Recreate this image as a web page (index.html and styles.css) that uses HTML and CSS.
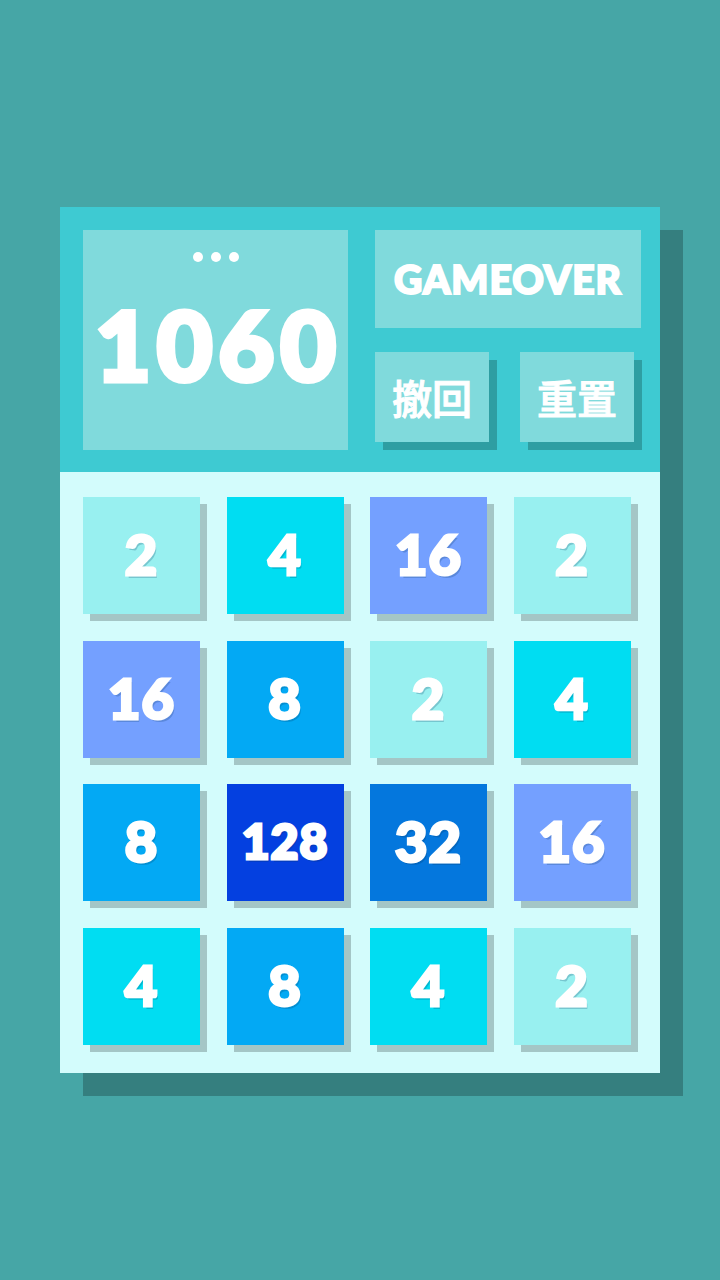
FILE: index.html
```html
<!DOCTYPE html>
<html lang="zh-Hant">
<head>
    <meta charset="UTF-8">
    <meta name="viewport" content="width=device-width, initial-scale=1.0">
    <title>2048</title>
    <link rel="stylesheet" href="styles.css">
</head>
<body>
    <div class="game">
        <div class="top">
            <div class="score-box">
                <div class="dots"><span></span><span></span><span></span></div>
                <div class="score">1060</div>
            </div>
            <div class="side">
                <div class="status">GAMEOVER</div>
                <div class="buttons">
                    <button class="btn">撤回</button>
                    <button class="btn">重置</button>
                </div>
            </div>
        </div>

        <div class="board">
            <div class="tile t2">2</div>
            <div class="tile t4">4</div>
            <div class="tile t16">16</div>
            <div class="tile t2">2</div>

            <div class="tile t16">16</div>
            <div class="tile t8">8</div>
            <div class="tile t2">2</div>
            <div class="tile t4">4</div>

            <div class="tile t8">8</div>
            <div class="tile t128 small">128</div>
            <div class="tile t32">32</div>
            <div class="tile t16">16</div>

            <div class="tile t4">4</div>
            <div class="tile t8">8</div>
            <div class="tile t4">4</div>
            <div class="tile t2">2</div>
        </div>
    </div>
</body>
</html>
```

FILE: styles.css
```css
body {
    margin: 0;
    min-height: 100vh;
    background: #46a6a6;
    display: flex;
    align-items: center;
    justify-content: center;
    font-family: 'Lato', 'Noto Sans', sans-serif;
}

.game {
    width: 600px;
    box-shadow: 23px 23px 0 #357f7f;
}

/* header: score + status + buttons */
.top {
    background: #3ecad2;
    height: 265px;
    box-sizing: border-box;
    padding: 23px 19px 22px 23px;
    display: flex;
    gap: 27px;
}

.score-box {
    width: 265px;
    height: 220px;
    background: #80dadc;
    display: flex;
    flex-direction: column;
    align-items: center;
    box-sizing: border-box;
    padding-top: 22px;
}

.dots {
    display: flex;
    gap: 8px;
}

.dots span {
    width: 10px;
    height: 10px;
    border-radius: 50%;
    background: white;
}

.score {
    color: white;
    font-size: 96px;
    font-weight: 900;
    line-height: 1;
    margin-top: 34px;
    letter-spacing: 6px;
    margin-right: -6px;
    -webkit-text-stroke: 5px white;
}

.side {
    width: 266px;
    display: flex;
    flex-direction: column;
    gap: 24px;
}

.status {
    height: 98px;
    background: #80dadc;
    color: white;
    font-size: 39px;
    font-weight: 900;
    letter-spacing: 1px;
    -webkit-text-stroke: 2px white;
    display: flex;
    align-items: center;
    justify-content: center;
}

.buttons {
    display: flex;
    gap: 31px;
}

.btn {
    width: 114px;
    height: 90px;
    border: none;
    padding: 0;
    background: #80dadc;
    color: white;
    font-family: 'Noto Sans CJK TC', sans-serif;
    font-size: 40px;
    font-weight: 500;
    -webkit-text-stroke: 1px white;
    box-shadow: 8px 8px 0 #2e9ea2;
    cursor: pointer;
}

/* board */
.board {
    background: #d3fcfc;
    height: 601px;
    box-sizing: border-box;
    padding: 25px 0 0 23px;
    display: grid;
    grid-template-columns: repeat(4, 117px);
    grid-auto-rows: 117px;
    gap: 26.5px;
}

.tile {
    display: flex;
    align-items: center;
    justify-content: center;
    color: white;
    font-size: 56px;
    font-weight: 900;
    letter-spacing: 1px;
    -webkit-text-stroke: 3px white;
    box-shadow: 7px 7px 0 #a4c6c6;
    text-shadow: 2px 3px 0 rgba(0, 50, 90, 0.22);
    padding-bottom: 4px;
    box-sizing: border-box;
}

.tile.small {
    font-size: 48px;
}

.t2 { background: #98f0f0; }
.t4 { background: #00ddf2; }
.t8 { background: #03a9f4; }
.t16 { background: #74a0ff; }
.t32 { background: #0477dd; }
.t128 { background: #0440e0; }
```
